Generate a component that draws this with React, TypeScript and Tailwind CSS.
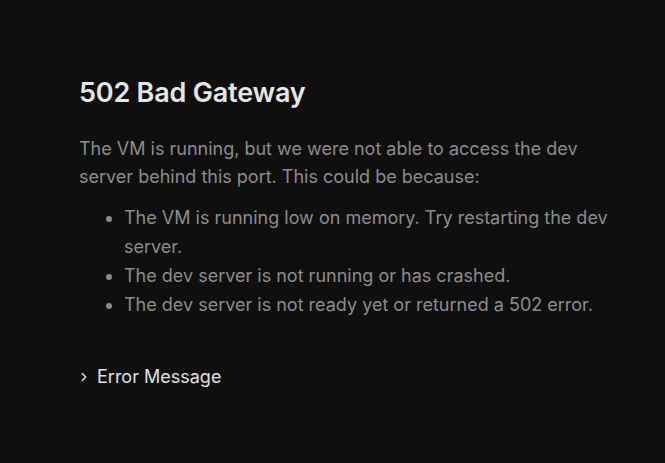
import { ChevronRight } from "lucide-react";

const reasons = [
  "The VM is running low on memory. Try restarting the dev server.",
  "The dev server is not running or has crashed.",
  "The dev server is not ready yet or returned a 502 error.",
];

export default function App() {
  return (
    <div
      className="min-h-screen w-full bg-[#0f0f0f] text-[#8c8c8c]"
      style={{ fontFamily: "Inter, 'Noto Sans', sans-serif" }}
    >
      <div className="pl-[79px] pt-[73px] w-[625px]">
        <h1 className="text-[27px] font-semibold leading-[40px] text-[#e6e6e6] tracking-[-0.2px]">
          502 Bad Gateway
        </h1>
        <p className="mt-[22px] text-[18px] leading-[28px]">
          The VM is running, but we were not able to access the dev server behind this port. This could be because:
        </p>
        <ul className="mt-[12px] list-disc pl-[45px] text-[18px] leading-[29px] marker:text-[#8c8c8c]">
          {reasons.map((r) => (
            <li key={r}>{r}</li>
          ))}
        </ul>
        <button className="mt-[44px] flex items-center gap-[6px] text-[18px] leading-[28px] text-[#e0e0e0] -ml-[2px]">
          <ChevronRight size={14} strokeWidth={2.5} />
          Error Message
        </button>
      </div>
    </div>
  );
}
